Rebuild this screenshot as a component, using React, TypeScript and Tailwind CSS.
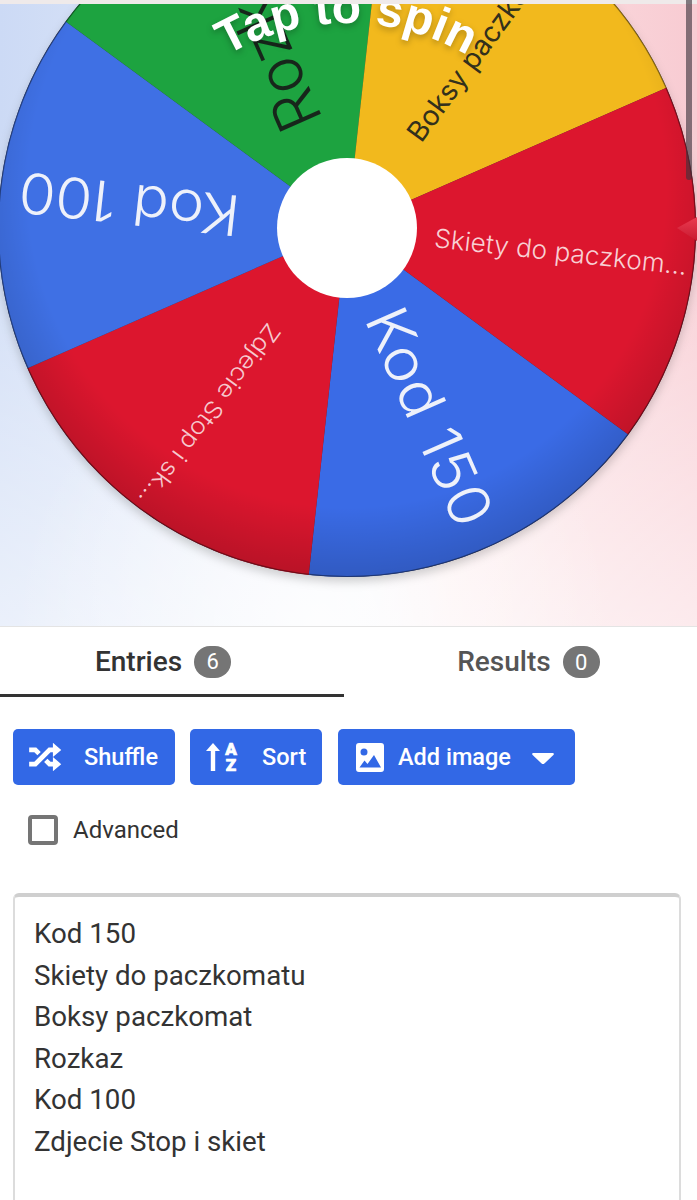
import React from "react";

const CX = 347;
const CY = 228;
const R = 349;

type Slice = { color: string; text: string; ink: string; size: number; r: number; length?: number; weight: number };

const slices: Slice[] = [
  { color: "#3a6be6", text: "Kod 150", ink: "#eef1fa", size: 58, r: 90, length: 232, weight: 300 },
  { color: "#dc162e", text: "Zdjecie Stop i sk...", ink: "#f6c9cf", size: 24, r: 122, length: 220, weight: 300 },
  { color: "#3f70e4", text: "Kod 100", ink: "#eef1fa", size: 56, r: 108, length: 222, weight: 300 },
  { color: "#1da340", text: "Rozkaz", ink: "#17261b", size: 61, r: 109, weight: 300 },
  { color: "#f2b91d", text: "Boksy paczkomat", ink: "#33301c", size: 28, r: 112, weight: 400 },
  { color: "#dc162e", text: "Skiety do paczkom...", ink: "#f8d0d4", size: 26, r: 88, length: 254, weight: 300 },
];

const START = 36.3;
const rad = (d: number) => (d * Math.PI) / 180;
const pt = (d: number, r: number) => `${CX + r * Math.cos(rad(d))} ${CY + r * Math.sin(rad(d))}`;

function Wheel() {
  return (
    <svg width={697} height={626} viewBox="0 0 697 626" className="block">
      <defs>
        <radialGradient id="edge" gradientUnits="userSpaceOnUse" cx={CX} cy={CY - 40} r={R + 40}>
          <stop offset="0.82" stopColor="#000" stopOpacity="0" />
          <stop offset="1" stopColor="#000" stopOpacity="0.16" />
        </radialGradient>
        <filter id="wheelShadow" x="-10%" y="-10%" width="120%" height="120%">
          <feDropShadow dx="0" dy="5" stdDeviation="5" floodColor="#000" floodOpacity="0.18" />
        </filter>
        <linearGradient id="pointer" x1="0" y1="0" x2="0" y2="1">
          <stop offset="0" stopColor="#ea3a50" />
          <stop offset="1" stopColor="#c81a30" />
        </linearGradient>
        <path id="arc" d="M 107 263 A 240 240 0 0 1 587 263" />
      </defs>
      <circle cx={CX} cy={CY} r={R} fill="#334" filter="url(#wheelShadow)" />
      {slices.map((s, i) => {
        const a = START + i * 60;
        return (
          <path
            key={i}
            d={`M ${CX} ${CY} L ${pt(a, R)} A ${R} ${R} 0 0 1 ${pt(a + 60, R)} Z`}
            fill={s.color}
          />
        );
      })}
      <circle cx={CX} cy={CY} r={R} fill="url(#edge)" />
      <circle cx={CX} cy={CY} r={R - 0.5} fill="none" stroke="#000" strokeOpacity="0.4" strokeWidth="1.2" />
      {slices.map((s, i) => {
        const mid = START + i * 60 + 30;
        return (
          <text
            key={i}
            x={CX + s.r}
            y={CY}
            transform={`rotate(${mid} ${CX} ${CY})`}
            dominantBaseline="central"
            fill={s.ink}
            fontSize={s.size}
            fontWeight={s.weight}
            textLength={s.length}
            lengthAdjust={s.length ? "spacingAndGlyphs" : undefined}
            className="font-['Inter',sans-serif]"
          >
            {s.text}
          </text>
        );
      })}
      <circle cx={CX} cy={CY} r={70} fill="#fff" />
      <text
        fill="#fff"
        fontSize={48}
        fontWeight={700}
        textAnchor="middle"
        className="font-['Liberation_Sans',sans-serif] drop-shadow-[0_3px_3px_rgba(0,0,0,0.25)]"
      >
        <textPath href="#arc" startOffset="50%">
          Tap to spin
        </textPath>
      </text>
      <path d="M677 228 L697 217 L697 241 Z" fill="url(#pointer)" />
    </svg>
  );
}

function ShuffleIcon() {
  return (
    <svg width={38} height={38} viewBox="0 0 24 24" fill="#fff">
      <path d="M17,3L22.25,7.5L17,12L22.25,16.5L17,21V18H14.26L11.44,15.18L13.56,13.06L15.5,15H17V9H15.5L6.5,18H2V15H5.26L14.26,6H17V3M2,6H6.5L9.32,8.82L7.2,10.94L5.26,9H2V6Z" />
    </svg>
  );
}

function SortIcon() {
  return (
    <svg width={32} height={32} viewBox="0 0 32 32" fill="#fff">
      <path d="M7 2 L14 10 H9.2 V30 H4.8 V10 H0 Z" />
      <text x="25" y="14" textAnchor="middle" fontSize="17" fontWeight="900" stroke="#fff" strokeWidth="0.7" className="font-['Roboto',sans-serif]">
        A
      </text>
      <text x="25" y="30" textAnchor="middle" fontSize="17" fontWeight="900" stroke="#fff" strokeWidth="0.7" className="font-['Roboto',sans-serif]">
        Z
      </text>
    </svg>
  );
}

function ImageIcon() {
  return (
    <svg width={28} height={29} viewBox="0 0 28 29" fill="#fff">
      <path
        fillRule="evenodd"
        d="M3 0H25A3 3 0 0 1 28 3V26A3 3 0 0 1 25 29H3A3 3 0 0 1 0 26V3A3 3 0 0 1 3 0ZM8 5.5A3.5 3.5 0 1 0 8 12.5A3.5 3.5 0 1 0 8 5.5ZM18 12L11.5 21L8.5 17.5L3.5 24.5H25Z"
      />
    </svg>
  );
}

function Btn({ className, children }: { className: string; children: React.ReactNode }) {
  return (
    <div className={`h-14 bg-[#3268e6] rounded-[5px] flex items-center text-white text-[23.5px] font-medium ${className}`}>
      {children}
    </div>
  );
}

function Badge({ n }: { n: number }) {
  return (
    <span className="w-[37px] h-8 rounded-full bg-[#757575] text-white text-[22px] font-normal flex items-center justify-center">
      {n}
    </span>
  );
}

const lines = ["Kod 150", "Skiety do paczkomatu", "Boksy paczkomat", "Rozkaz", "Kod 100", "Zdjecie Stop i skiet"];

export default function App() {
  return (
    <div className="relative w-[697px] h-[1200px] overflow-hidden bg-white font-['Roboto',sans-serif] text-[#333]">
      <div className="relative h-[627px] border-b border-[#e4e4e4] bg-[radial-gradient(ellipse_300px_300px_at_45%_100%,rgba(255,255,255,0.75),rgba(255,255,255,0)),linear-gradient(180deg,rgba(255,255,255,0)_20%,rgba(255,255,255,0.6)_100%),linear-gradient(90deg,#ccdaf5_0%,#dfe7f8_30%,#f0f2fa_52%,#fbe4e6_65%,#f8cbd2_100%)]">
        <Wheel />
        <div className="absolute top-0 left-0 right-0 h-1 bg-[#efeaea]" />
        <div className="absolute top-0 left-[686px] w-[6px] h-[180px] rounded-b-[3px] bg-[rgba(60,50,60,0.62)]" />
      </div>

      <div className="flex h-[70px]">
        <div className="w-[344px] h-[70px] border-b-[3px] border-[#333] flex items-center justify-center gap-3 pr-[18px] pt-[2px] text-[28px] font-medium text-[#333]">
          Entries
          <Badge n={6} />
        </div>
        <div className="flex-1 h-[70px] flex items-center justify-center gap-3 pl-[16px] text-[28px] font-medium text-[#555]">
          Results
          <Badge n={0} />
        </div>
      </div>

      <div className="flex mt-8 pl-[13px]">
        <Btn className="w-[162px] pl-[13px]">
          <ShuffleIcon />
          <span className="ml-[20px] mt-[2px]">Shuffle</span>
        </Btn>
        <Btn className="w-[132px] ml-[15px] pl-[16px]">
          <SortIcon />
          <span className="ml-[24px] mt-[2px]">Sort</span>
        </Btn>
        <Btn className="w-[237px] ml-[16px] pl-[18px]">
          <ImageIcon />
          <span className="ml-[14px] mt-[2px]">Add image</span>
          <svg width={22} height={11} viewBox="0 0 22 11" fill="#fff" className="ml-[21px] mt-[3px]">
            <path d="M1.5 0H20.5C21.8 0 22.3 1.2 21.4 2.1L12.4 10.4C11.6 11.1 10.4 11.1 9.6 10.4L0.6 2.1C-0.3 1.2 0.2 0 1.5 0Z" />
          </svg>
        </Btn>
      </div>

      <div className="flex items-center mt-[30px] pl-[28px]">
        <div className="w-[30px] h-[30px] border-[4px] border-[#757575] rounded-[4px]" />
        <span className="ml-[15px] text-[24px] leading-[24px] mb-[1px] text-[#333]">Advanced</span>
      </div>

      <div className="mt-[48px] ml-[13px] w-[668px] h-[400px] rounded-[6px] border-2 border-[#dcdcdc] border-t-[4px] border-t-[#cfcfcf] pl-[19px] pt-[16px] text-[27.7px] leading-[41.5px] text-[#333]">
        {lines.map((l) => (
          <div key={l}>{l}</div>
        ))}
      </div>
    </div>
  );
}
